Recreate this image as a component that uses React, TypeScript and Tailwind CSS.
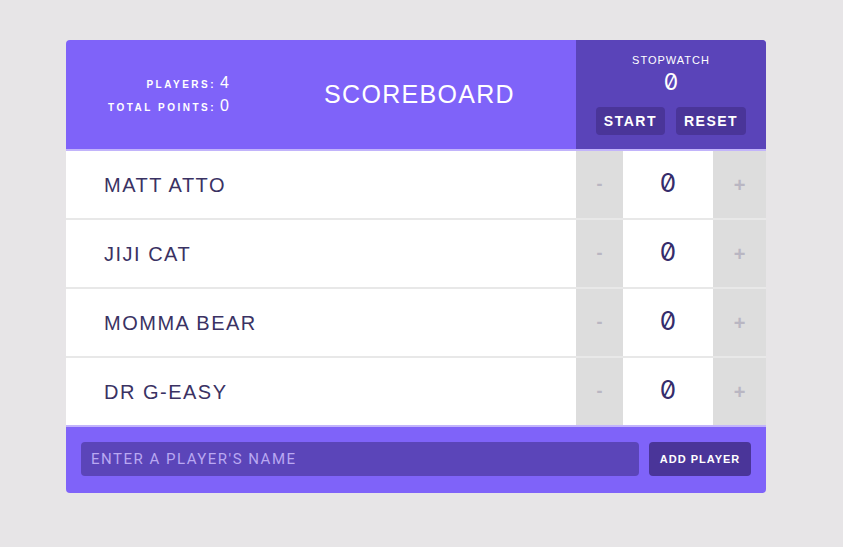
import React from "react";

const players = ["MATT ATTO", "JIJI CAT", "MOMMA BEAR", "DR G-EASY"];

const zeroFont: React.CSSProperties = {
  fontFamily: 'Inter, "DejaVu Sans Mono", monospace',
  fontFeatureSettings: '"zero" 1, "tnum" 1',
};

function PlayerRow({ name, last }: { name: string; last: boolean }) {
  return (
    <div className={`flex bg-white ${last ? "h-[67px]" : "h-[69px] border-b-2 border-[#e8e8e8]"}`}>
      <div className="flex flex-1 items-center pl-[38px] text-[20px] tracking-[1.5px] text-[#3a3263]" style={{ fontFamily: '"Liberation Sans", Arial, sans-serif' }}>
        {name}
      </div>
      <div className="flex">
        <button className="flex w-[47px] items-center justify-center bg-[#dddddd] text-[18px] font-bold text-[#b9b6c2]">-</button>
        <div className="flex w-[90px] items-center justify-center pb-[4px] text-[26px] font-normal text-[#352c6b]" style={zeroFont}>
          0
        </div>
        <button className="flex w-[53px] items-center justify-center bg-[#dddddd] text-[20px] font-bold text-[#b9b6c2]">+</button>
      </div>
    </div>
  );
}

export default function App() {
  return (
    <div className="min-h-[547px] bg-[#e7e5e7] pt-[40px] pl-[66px]" style={{ fontFamily: '"Liberation Sans", Arial, sans-serif' }}>
      <div className="w-[700px] overflow-hidden rounded-[4px]">
        <header className="flex h-[111px] border-b-2 border-[#c2b4fb] bg-[#7f63f9]">
          <div className="flex w-[197px] flex-col items-end justify-center pr-[34px] text-white">
            <div className="flex items-baseline leading-[21px]">
              <span className="text-[10px] font-bold tracking-[2.5px]">PLAYERS:</span>
              <span className="ml-[4px] text-[16px]">4</span>
            </div>
            <div className="flex items-baseline leading-[21px]">
              <span className="text-[10px] font-bold tracking-[2.5px]">TOTAL POINTS:</span>
              <span className="ml-[4px] text-[16px]">0</span>
            </div>
          </div>
          <h1 className="flex flex-1 items-center justify-center text-[25px] font-normal tracking-[1.3px] text-white">SCOREBOARD</h1>
          <div className="flex w-[190px] flex-col items-center bg-[#5a44b9] pt-[14px] text-white">
            <div className="text-[11px] leading-[13px] tracking-[1px]">STOPWATCH</div>
            <div className="text-[23px] font-normal leading-[30px]" style={zeroFont}>0</div>
            <div className="mt-[10px] flex gap-[11px]">
              <button className="h-[28px] rounded-[4px] bg-[#4a3599] px-[8px] text-[14px] font-bold tracking-[1.5px] text-white">START</button>
              <button className="h-[28px] rounded-[4px] bg-[#4a3599] px-[8px] text-[14px] font-bold tracking-[1.5px] text-white">RESET</button>
            </div>
          </div>
        </header>
        {players.map((p, i) => (
          <PlayerRow key={p} name={p} last={i === players.length - 1} />
        ))}
        <form className="flex gap-[10px] border-t-2 border-[#c2b4fb] bg-[#7f63f9] px-[15px] pt-[15px] pb-[17px]" onSubmit={(e) => e.preventDefault()}>
          <input
            className="h-[34px] flex-1 rounded-[4px] bg-[#5b45b9] px-[10px] text-[15px] tracking-[1.5px] text-white outline-none placeholder:text-[#b9a8f2]"
            style={{ fontFamily: 'Roboto, "Liberation Sans", sans-serif' }}
            placeholder="ENTER A PLAYER'S NAME"
          />
          <button className="h-[34px] w-[102px] rounded-[4px] bg-[#4a3599] text-[11px] font-bold tracking-[1px] text-white">ADD PLAYER</button>
        </form>
      </div>
    </div>
  );
}
